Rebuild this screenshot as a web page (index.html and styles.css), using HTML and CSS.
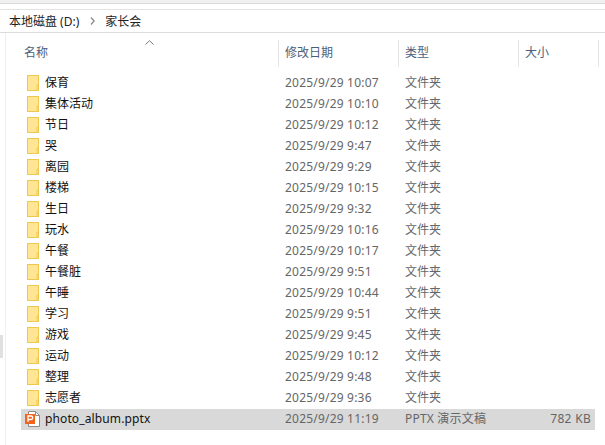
FILE: index.html
```html
<!DOCTYPE html>
<html lang="zh-CN">
<head>
<meta charset="utf-8">
<title>家长会</title>
<link rel="stylesheet" href="styles.css">
</head>
<body>
<div class="topband"></div>
<div class="address">
  <span>本地磁盘 (D:)</span>
  <svg class="crumb" width="5" height="8" viewBox="0 0 5 8"><path d="M1 0.5 L4.2 4 L1 7.5" fill="none" stroke="#8a8a8a" stroke-width="1.3"/></svg>
  <span>家长会</span>
</div>
<div class="pane">
  <div class="side"><div class="thumb"></div></div>
  <div class="main">
    <div class="head">
      <div class="hcell name">名称
        <svg class="sort" width="9" height="5" viewBox="0 0 9 5"><path d="M0.5 4.5 L4.5 0.7 L8.5 4.5" fill="none" stroke="#7a7a7a" stroke-width="1"/></svg>
      </div>
      <div class="hcell date">修改日期</div>
      <div class="hcell type">类型</div>
      <div class="hcell size">大小</div>
    </div>
    <div class="list">
      <div class="row"><div class="cname"><svg class="ficon"><use href="#folder"/></svg>保育</div><div class="cdate">2025/9/29 10:07</div><div class="ctype">文件夹</div></div>
      <div class="row"><div class="cname"><svg class="ficon"><use href="#folder"/></svg>集体活动</div><div class="cdate">2025/9/29 10:10</div><div class="ctype">文件夹</div></div>
      <div class="row"><div class="cname"><svg class="ficon"><use href="#folder"/></svg>节日</div><div class="cdate">2025/9/29 10:12</div><div class="ctype">文件夹</div></div>
      <div class="row"><div class="cname"><svg class="ficon"><use href="#folder"/></svg>哭</div><div class="cdate">2025/9/29 9:47</div><div class="ctype">文件夹</div></div>
      <div class="row"><div class="cname"><svg class="ficon"><use href="#folder"/></svg>离园</div><div class="cdate">2025/9/29 9:29</div><div class="ctype">文件夹</div></div>
      <div class="row"><div class="cname"><svg class="ficon"><use href="#folder"/></svg>楼梯</div><div class="cdate">2025/9/29 10:15</div><div class="ctype">文件夹</div></div>
      <div class="row"><div class="cname"><svg class="ficon"><use href="#folder"/></svg>生日</div><div class="cdate">2025/9/29 9:32</div><div class="ctype">文件夹</div></div>
      <div class="row"><div class="cname"><svg class="ficon"><use href="#folder"/></svg>玩水</div><div class="cdate">2025/9/29 10:16</div><div class="ctype">文件夹</div></div>
      <div class="row"><div class="cname"><svg class="ficon"><use href="#folder"/></svg>午餐</div><div class="cdate">2025/9/29 10:17</div><div class="ctype">文件夹</div></div>
      <div class="row"><div class="cname"><svg class="ficon"><use href="#folder"/></svg>午餐脏</div><div class="cdate">2025/9/29 9:51</div><div class="ctype">文件夹</div></div>
      <div class="row"><div class="cname"><svg class="ficon"><use href="#folder"/></svg>午睡</div><div class="cdate">2025/9/29 10:44</div><div class="ctype">文件夹</div></div>
      <div class="row"><div class="cname"><svg class="ficon"><use href="#folder"/></svg>学习</div><div class="cdate">2025/9/29 9:51</div><div class="ctype">文件夹</div></div>
      <div class="row"><div class="cname"><svg class="ficon"><use href="#folder"/></svg>游戏</div><div class="cdate">2025/9/29 9:45</div><div class="ctype">文件夹</div></div>
      <div class="row"><div class="cname"><svg class="ficon"><use href="#folder"/></svg>运动</div><div class="cdate">2025/9/29 10:12</div><div class="ctype">文件夹</div></div>
      <div class="row"><div class="cname"><svg class="ficon"><use href="#folder"/></svg>整理</div><div class="cdate">2025/9/29 9:48</div><div class="ctype">文件夹</div></div>
      <div class="row"><div class="cname"><svg class="ficon"><use href="#folder"/></svg>志愿者</div><div class="cdate">2025/9/29 9:36</div><div class="ctype">文件夹</div></div>
      <div class="row selected"><div class="cname"><svg class="ficon ppt" width="15" height="16" viewBox="0 0 15 16"><path d="M3.5 0.5 H10.5 L14.5 4.5 V15.5 H3.5 Z" fill="#fff" stroke="#8c8c8c"/><path d="M10.5 0.5 V4.5 H14.5" fill="none" stroke="#8c8c8c"/><rect x="0" y="3" width="10" height="10" fill="#f0641e"/><path d="M3 11 V5 H6 A1.7 1.7 0 0 1 6 8.5 H3" fill="none" stroke="#fff" stroke-width="1.3"/></svg>photo_album.pptx</div><div class="cdate">2025/9/29 11:19</div><div class="ctype">PPTX 演示文稿</div><div class="csize">782 KB</div></div>
    </div>
  </div>
</div>
<svg class="defs" width="0" height="0">
  <symbol id="folder" viewBox="0 0 13 16">
    <rect x="0.5" y="0.5" width="11" height="15" fill="#ffe594" stroke="#efc94f"/>
    <path d="M11.5 10 H10 V15.5" fill="none" stroke="#efc94f"/>
  </symbol>
</svg>
</body>
</html>
```
FILE: styles.css
```css
html, body { margin: 0; padding: 0; background: #fff; }
body {
  width: 605px;
  height: 445px;
  overflow: hidden;
  font-family: "Noto Sans", "Noto Sans CJK SC", sans-serif;
  font-size: 12px;
  color: #1a1a1a;
}
.topband { height: 3px; background: #f0f0f0; border-bottom: 1px solid #d9d9d9; margin-bottom: 5px; }
.address {
  height: 22px;
  display: flex;
  align-items: center;
  gap: 11px;
  padding-left: 9px;
  border-top: 1px solid #e3e3e3;
  border-bottom: 1px solid #dcdcdc;
  color: #222;
}
.crumb { margin-right: -1px; }
.pane { display: flex; height: 412px; }
.side { width: 5px; flex: none; position: relative; border-right: 1px solid #efefef; }
.thumb { position: absolute; left: 0; top: 302px; width: 3px; height: 23px; background: #e0e0e0; }
.main { flex: 1; min-width: 0; padding-left: 15px; padding-right: 4px; }
.head { display: flex; height: 27px; margin-top: 7px; color: #4c607a; }
.hcell { flex: none; height: 27px; line-height: 25px; padding-left: 6px; box-sizing: border-box; border-right: 1px solid #e5e5e5; position: relative; }
.hcell.name { width: 258px; padding-left: 3px; }
.hcell.date { width: 120px; }
.hcell.type { width: 120px; }
.hcell.size { width: 80px; }
.sort { position: absolute; left: 124px; top: 0; }
.list { margin-top: 6px; width: 574px; }
.row { display: flex; height: 21px; line-height: 19px; align-items: flex-start; }
.cname { width: 258px; flex: none; display: flex; align-items: center; padding-left: 6px; box-sizing: border-box; color: #111; }
.ficon { width: 13px; height: 16px; margin-top: 1px; margin-right: 5px; flex: none; }
.ppt { width: 15px; margin-left: -2px; margin-right: 5px; }
.cdate { width: 120px; flex: none; padding-left: 6px; box-sizing: border-box; color: #666; letter-spacing: 0.2px; }
.ctype { width: 120px; flex: none; padding-left: 6px; box-sizing: border-box; color: #666; }
.csize { width: 76px; flex: none; text-align: right; padding-right: 4px; box-sizing: border-box; color: #666; letter-spacing: 0.3px; }
.selected { background: #d9d9d9; }
.selected .cname { letter-spacing: 0.12px; }
.selected .ctype { letter-spacing: 0.2px; }
.defs { position: absolute; }
```
